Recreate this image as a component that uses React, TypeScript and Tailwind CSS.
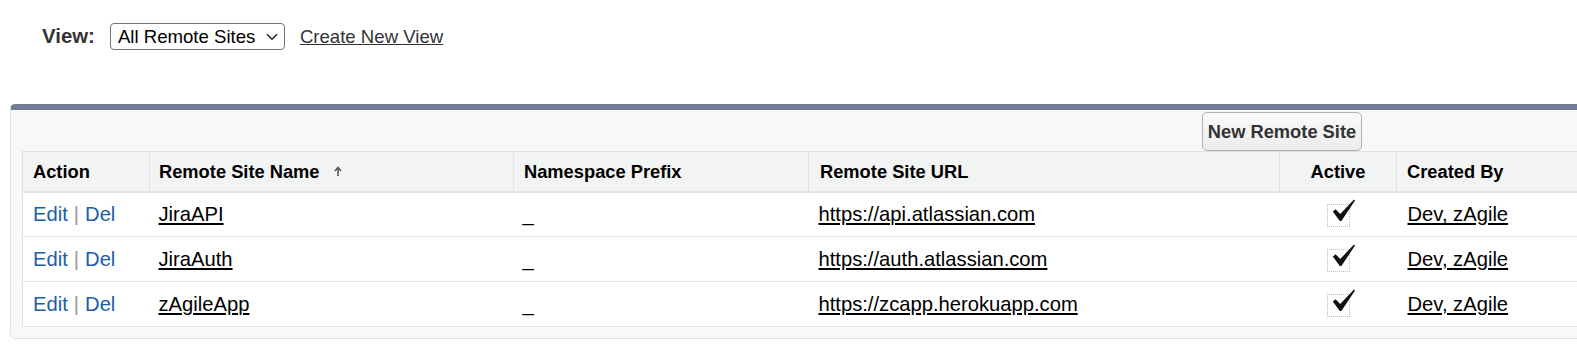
import React from "react"

const rows = [
  { name: "JiraAPI", url: "https://api.atlassian.com" },
  { name: "JiraAuth", url: "https://auth.atlassian.com" },
  { name: "zAgileApp", url: "https://zcapp.herokuapp.com" },
]

function CheckImg() {
  return (
    <span className="relative inline-block w-[23px] h-[23px] border border-dotted border-[#bdbdbd] align-middle">
      <svg className="absolute left-[4px] top-[-6px]" width="24" height="23" viewBox="0 0 24 23">
        <path d="M0.8 12.6 L3.6 10.2 L8.2 15 L22 0.6 L23 1.5 L9.4 22 L7.8 22 Z" fill="#111" />
      </svg>
    </span>
  )
}

export default function App() {
  return (
    <div className="w-[1577px] h-[351px] overflow-hidden bg-white font-['Liberation_Sans',Arial,sans-serif]">
      {/* view picker */}
      <div className="h-[104px] pt-[23px]">
        <div className="flex items-center h-[27px] pl-[42px]">
          <span className="text-[20.4px] font-bold text-[#333] mr-[15px]">View:</span>
          <div className="flex items-center w-[175px] h-[27px] border border-[#767676] rounded-[4px] pl-[7px] pr-[6px] text-[18.6px] text-black bg-white">
            <span>All Remote Sites</span>
            <svg className="ml-auto" width="12" height="8" viewBox="0 0 12 8">
              <path d="M1 1.2 L6 6.2 L11 1.2" fill="none" stroke="#222" strokeWidth="1.5" />
            </svg>
          </div>
          <a className="ml-[15px] text-[18.6px] text-[#333] underline">Create New View</a>
        </div>
      </div>

      {/* list panel */}
      <div className="ml-[10px] w-[1620px] bg-[#f8f8f8] border border-[#e3e3e3] border-t-[6px] border-t-[#717c97] rounded-[5px] px-[11px] pb-[11px]">
        <div className="h-[41px] pt-[2px]">
          <button className="ml-[1180px] w-[160px] h-[39px] bg-gradient-to-b from-[#fafafa] to-[#ececec] border border-[#b0b0b0] rounded-[5px] text-[18.3px] font-bold text-[#333]">
            New Remote Site
          </button>
        </div>
        <table className="table-fixed border-collapse w-[1598px] border border-[#e0e3e5] bg-white text-left">
          <colgroup>
            <col className="w-[127px]" />
            <col className="w-[364px]" />
            <col className="w-[295px]" />
            <col className="w-[471px]" />
            <col className="w-[117px]" />
            <col />
          </colgroup>
          <thead>
            <tr className="h-[40px] bg-[#f2f3f3] text-[18.3px] font-bold text-black">
              <th className="pl-[10px] border-r border-b-2 border-[#e0e3e5] font-bold">Action</th>
              <th className="pl-[9px] border-r border-b-2 border-[#e0e3e5] font-bold">
                <span className="inline-flex items-center">
                  Remote Site Name
                  <svg className="ml-[14px]" width="8" height="10" viewBox="0 0 8 10">
                    <path d="M4 10 V2 M1 5 L4 1.5 L7 5" fill="none" stroke="#555" strokeWidth="1.5" />
                  </svg>
                </span>
              </th>
              <th className="pl-[10px] border-r border-b-2 border-[#e0e3e5] font-bold">Namespace Prefix</th>
              <th className="pl-[11px] border-r border-b-2 border-[#e0e3e5] font-bold">Remote Site URL</th>
              <th className="text-center border-r border-b-2 border-[#e0e3e5] font-bold">Active</th>
              <th className="pl-[10px] border-b-2 border-[#e0e3e5] font-bold">Created By</th>
            </tr>
          </thead>
          <tbody>
            {rows.map((r) => (
              <tr key={r.name} className="h-[45px] border-b border-[#e3e3e3] text-[20.2px] text-black">
                <td className="pl-[10px]">
                  <a className="text-[#1b5ea6]">Edit</a>
                  <span className="text-[#999] mx-[6px]">|</span>
                  <a className="text-[#1b5ea6]">Del</a>
                </td>
                <td className="pl-[9px]">
                  <a className="underline">{r.name}</a>
                </td>
                <td className="pl-[9px]">_</td>
                <td className="pl-[10px]">
                  <a className="underline">{r.url}</a>
                </td>
                <td className="text-center">
                  <CheckImg />
                </td>
                <td className="pl-[11px]">
                  <a className="underline">Dev, zAgile</a>
                </td>
              </tr>
            ))}
          </tbody>
        </table>
      </div>
    </div>
  )
}
